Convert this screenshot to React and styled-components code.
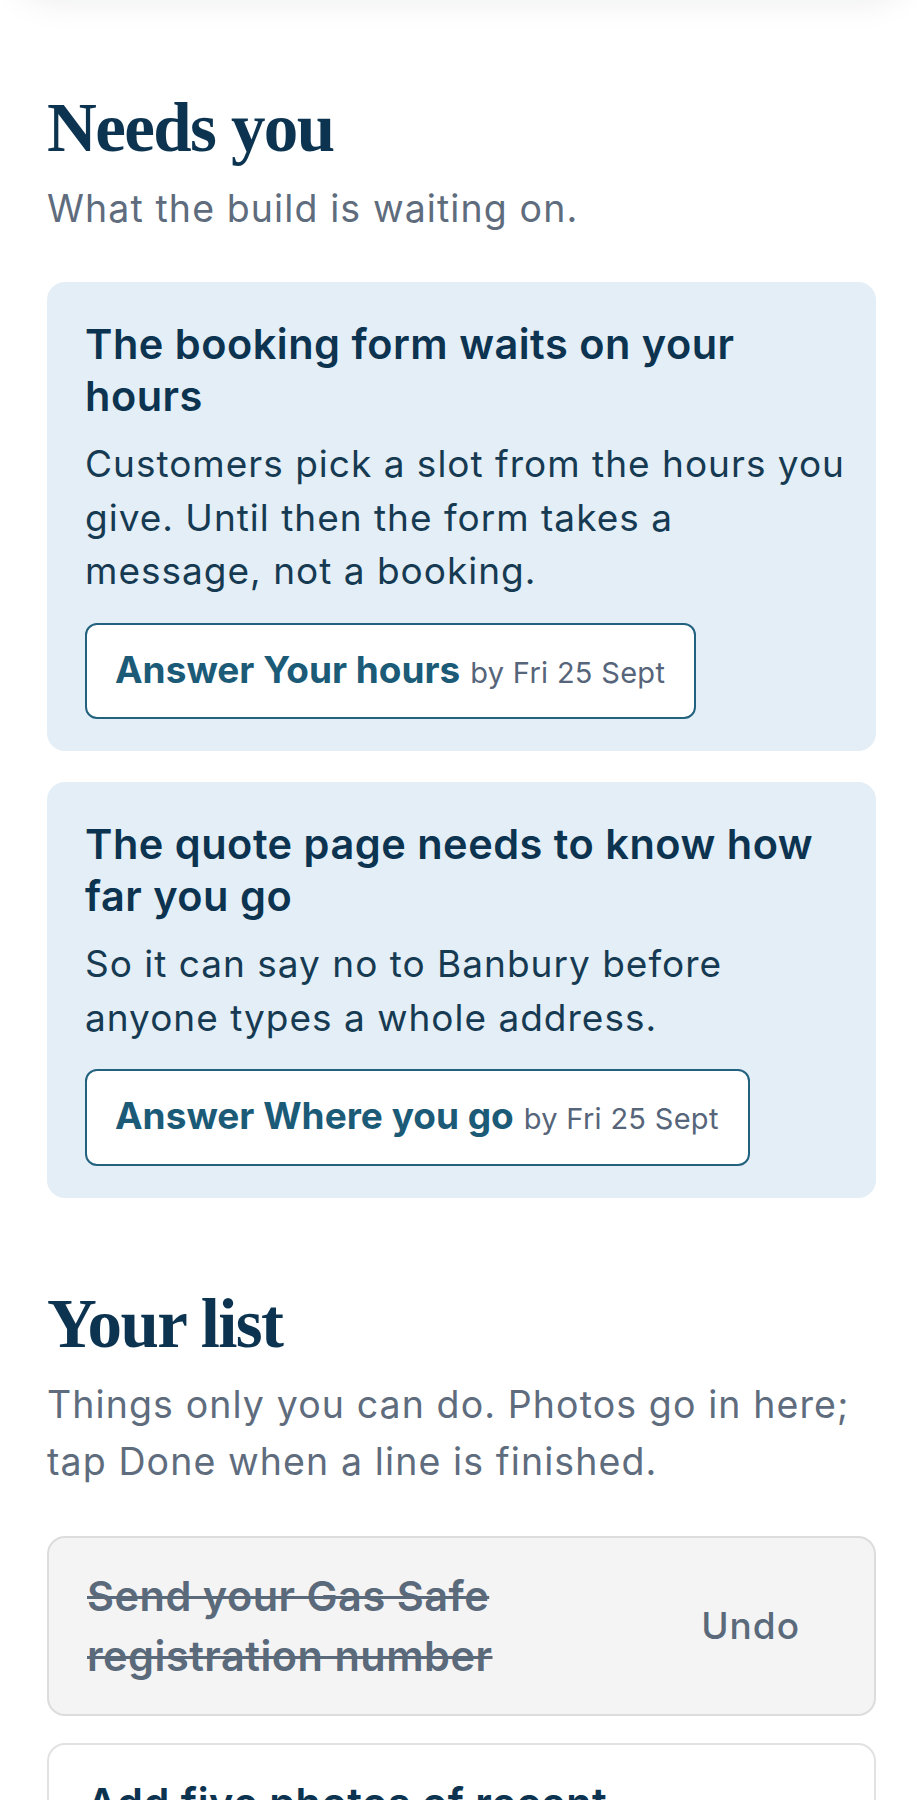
import React from "react"
import styled, { createGlobalStyle } from "styled-components"

const GlobalStyle = createGlobalStyle`
  html, body {
    margin: 0;
    padding: 0;
    background: #ffffff;
  }
  body {
    font-family: Inter, "DejaVu Sans", sans-serif;
    -webkit-font-smoothing: antialiased;
  }
  * {
    box-sizing: border-box;
  }
`

const Shell = styled.div`
  display: flex;
  flex-direction: column;
  min-height: 1900px;
`

// the bottom edge of the sticky bar sits just above the fold, only its shadow shows
const TopShade = styled.div`
  height: 54px;
  margin: -64px 20px 0;
  border-radius: 0 0 30px 30px;
  background: #ffffff;
  box-shadow: 0 4px 40px rgba(15, 30, 45, 0.11);
`

const Page = styled.main`
  padding: 101px 47px 0;
`

const Section = styled.section`
  display: flex;
  flex-direction: column;
  margin-top: ${p => p.$gap || 0}px;
`

const Heading = styled.h2`
  margin: 0;
  font-family: "Liberation Serif", "Times New Roman", serif;
  font-weight: 700;
  font-size: 69px;
  line-height: 75px;
  letter-spacing: -1.6px;
  color: #0c3350;
`

const Lead = styled.p`
  margin: 14px 0 0;
  font-size: 37.5px;
  line-height: 57px;
  letter-spacing: 1.1px;
  color: #5e6c7d;
`

const CardList = styled.div`
  display: flex;
  flex-direction: column;
  gap: 31px;
  margin-top: 45px;
`

const AskCard = styled.article`
  display: flex;
  flex-direction: column;
  align-items: flex-start;
  padding: 36px 26px 32px 38px;
  border-radius: 18px;
  background: #e3eef6;
`

const AskTitle = styled.h3`
  margin: 0;
  font-size: 41.5px;
  font-weight: 600;
  line-height: 52px;
  letter-spacing: 0.5px;
  color: #0c3350;
`

const AskBody = styled.p`
  margin: 15px 0 0;
  font-size: 37px;
  line-height: 53.5px;
  letter-spacing: 1px;
  color: #163a52;
`

const AnswerButton = styled.button`
  display: inline-flex;
  align-items: baseline;
  gap: 10px;
  margin-top: 25px;
  padding: 18px 29px 18px 28px;
  border: 2px solid #23627f;
  border-radius: 12px;
  background: #ffffff;
  font-family: inherit;
  line-height: 53.5px;
  cursor: pointer;
`

const AnswerLabel = styled.span`
  font-size: 37px;
  font-weight: 700;
  color: #1b5b77;
`

const AnswerDue = styled.span`
  font-size: 29px;
  font-weight: 400;
  letter-spacing: 0.3px;
  color: #56657a;
`

const TaskList = styled.div`
  display: flex;
  flex-direction: column;
  gap: 27px;
  margin-top: 46px;
`

const TaskRow = styled.div`
  display: flex;
  align-items: center;
  gap: 16px;
  padding: 28px 36px 28px 38px;
  border: 2px solid ${p => (p.$done ? "#dcdcdc" : "#e2e2e2")};
  border-radius: 18px;
  background: ${p => (p.$done ? "#f4f4f4" : "#ffffff")};
`

const TaskTitle = styled.span`
  flex: 1;
  font-size: 41.5px;
  font-weight: 600;
  line-height: 60px;
  letter-spacing: 0.5px;
  color: ${p => (p.$done ? "#5a6a7b" : "#0c3350")};
  text-decoration: ${p => (p.$done ? "line-through" : "none")};
  text-decoration-thickness: 3px;
`

const TaskAction = styled.button`
  padding: 12px 38px 12px 16px;
  border: none;
  background: none;
  font-family: inherit;
  font-size: 37px;
  font-weight: 500;
  letter-spacing: 1px;
  color: ${p => (p.$done ? "#5a6a7b" : "#1b5b77")};
  cursor: pointer;
`

const asks = [
  {
    title: "The booking form waits on your hours",
    body: "Customers pick a slot from the hours you give. Until then the form takes a message, not a booking.",
    answer: "Your hours",
    due: "Fri 25 Sept"
  },
  {
    title: "The quote page needs to know how far you go",
    body: "So it can say no to Banbury before anyone types a whole address.",
    answer: "Where you go",
    due: "Fri 25 Sept"
  }
]

const tasks = [
  { title: "Send your Gas Safe registration number", done: true },
  { title: "Add five photos of recent boiler work", done: false }
]

export default function App() {
  return (
    <Shell>
      <GlobalStyle />
      <TopShade />
      <Page>
        <Section>
          <Heading>Needs you</Heading>
          <Lead>What the build is waiting on.</Lead>
          <CardList>
            {asks.map(ask => (
              <AskCard key={ask.answer}>
                <AskTitle>{ask.title}</AskTitle>
                <AskBody>{ask.body}</AskBody>
                <AnswerButton>
                  <AnswerLabel>Answer {ask.answer}</AnswerLabel>
                  <AnswerDue>by {ask.due}</AnswerDue>
                </AnswerButton>
              </AskCard>
            ))}
          </CardList>
        </Section>

        <Section $gap={89}>
          <Heading>Your list</Heading>
          <Lead>Things only you can do. Photos go in here; tap Done when a line is finished.</Lead>
          <TaskList>
            {tasks.map(task => (
              <TaskRow key={task.title} $done={task.done}>
                <TaskTitle $done={task.done}>{task.title}</TaskTitle>
                <TaskAction $done={task.done}>{task.done ? "Undo" : "Done"}</TaskAction>
              </TaskRow>
            ))}
          </TaskList>
        </Section>
      </Page>
    </Shell>
  )
}
